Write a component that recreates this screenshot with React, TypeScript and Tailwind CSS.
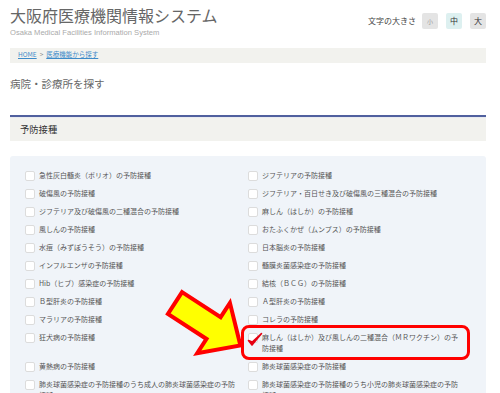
import React from 'react'

const leftItems = [
  '急性灰白髄炎（ポリオ）の予防接種',
  '破傷風の予防接種',
  'ジフテリア及び破傷風の二種混合の予防接種',
  '風しんの予防接種',
  '水痘（みずぼうそう）の予防接種',
  'インフルエンザの予防接種',
  'Hib（ヒブ）感染症の予防接種',
  'Ｂ型肝炎の予防接種',
  'マラリアの予防接種',
  '狂犬病の予防接種',
  '黄熱病の予防接種',
  '肺炎球菌感染症の予防接種のうち成人の肺炎球菌感染症の予防接種',
]

const rightItems = [
  'ジフテリアの予防接種',
  'ジフテリア・百日せき及び破傷風の三種混合の予防接種',
  '麻しん（はしか）の予防接種',
  'おたふくかぜ（ムンプス）の予防接種',
  '日本脳炎の予防接種',
  '髄膜炎菌感染症の予防接種',
  '結核（ＢＣＧ）の予防接種',
  'Ａ型肝炎の予防接種',
  'コレラの予防接種',
  '麻しん（はしか）及び風しんの二種混合（ＭＲワクチン）の予防接種',
  '肺炎球菌感染症の予防接種',
  '肺炎球菌感染症の予防接種のうち小児の肺炎球菌感染症の予防接種',
]

function Item({ label }: { label: string }) {
  return (
    <label className="flex items-start pr-[12px]">
      <span className="mt-[0.5px] h-[10px] w-[10px] shrink-0 rounded-[2px] border border-[#dcdcdc] bg-white" />
      <span className="ml-[4px] text-[7px] leading-[11px] text-[#555]">{label}</span>
    </label>
  )
}

export default function App() {
  const rows = leftItems.flatMap((l, i) => [l, rightItems[i]])

  return (
    <div className="relative h-[393px] w-[500px] overflow-hidden bg-white font-['Noto_Sans_CJK_JP',sans-serif]">
      <div className="mx-[10px] w-[476px]">
        {/* header */}
        <div className="flex items-start justify-between">
          <div>
            <h1 className="mt-[7px] text-[16px] font-normal leading-none text-[#666]">
              大阪府医療機関情報システム
            </h1>
            <p className="mt-[6px] font-['Liberation_Sans',sans-serif] text-[7.6px] leading-none text-[#aaa]">
              Osaka Medical Facilities Information System
            </p>
          </div>
          <div className="mt-[13px] flex items-center">
            <span className="mr-[6px] text-[8px] text-[#444]">文字の大きさ</span>
            <button className="flex h-[16px] w-[16px] items-center justify-center rounded-[2px] bg-[#e4e4e4] text-[6px] text-[#999]">
              小
            </button>
            <button className="ml-[8px] flex h-[16px] w-[16px] items-center justify-center rounded-[2px] bg-[#ddf0f0] text-[8px] text-[#333]">
              中
            </button>
            <button className="ml-[8px] flex h-[16px] w-[16px] items-center justify-center rounded-[2px] bg-[#e4e4e4] text-[8px] text-[#333]">
              大
            </button>
          </div>
        </div>

        {/* breadcrumb */}
        <div className="mt-[11px] flex h-[15px] items-center bg-[#f2f2ee] pl-[8px] text-[6.5px] text-[#888]">
          <a className="text-[#3d8bc9] underline">HOME</a>
          <span className="mx-[3px]">&gt;</span>
          <a className="text-[#3d8bc9] underline">医療機能から探す</a>
        </div>

        <h2 className="mt-[16px] text-[10.5px] font-normal leading-none text-[#666]">病院・診療所を探す</h2>

        {/* section heading */}
        <div className="mt-[26px] border-t-2 border-[#50609e]">
          <div className="flex h-[24px] items-center border-t border-[#e8eaf0] bg-[#f2f2ee] pl-[10px] text-[9.3px] text-[#333]">
            予防接種
          </div>
        </div>

        {/* checkbox panel */}
        <div className="mt-[15px] rounded-[3px] bg-[#f0f4f9] pb-[20px] pl-[15px] pr-[15px] pt-[14px]">
          <div className="grid grid-cols-[223px_223px] gap-y-[7px]">
            {rows.map((label, i) => (
              <Item key={i} label={label} />
            ))}
          </div>
        </div>
      </div>

      {/* annotation: red highlight box */}
      <div className="pointer-events-none absolute left-[241px] top-[325px] h-[35px] w-[229px] rounded-[8px] border-[3px] border-[#ff0000]" />

      {/* annotation: red check mark */}
      <svg className="pointer-events-none absolute left-[247px] top-[332px]" width="16" height="15" viewBox="0 0 16 15">
        <path d="M1.5 8.5 L5 13 L14.5 1.5 L5.2 10 Z" fill="#e60012" stroke="#e60012" strokeWidth="1.6" strokeLinejoin="round" />
      </svg>

      {/* annotation: yellow arrow */}
      <svg className="pointer-events-none absolute left-[150px] top-[270px]" width="110" height="110" viewBox="0 0 110 110">
        <g transform="translate(25 33) rotate(33)">
          <polygon
            points="0,-13 46,-13 46,-30 78,0 46,30 46,13 0,13"
            fill="#ffff00"
            stroke="#ff0000"
            strokeWidth="4"
            strokeLinejoin="miter"
          />
        </g>
      </svg>
    </div>
  )
}
